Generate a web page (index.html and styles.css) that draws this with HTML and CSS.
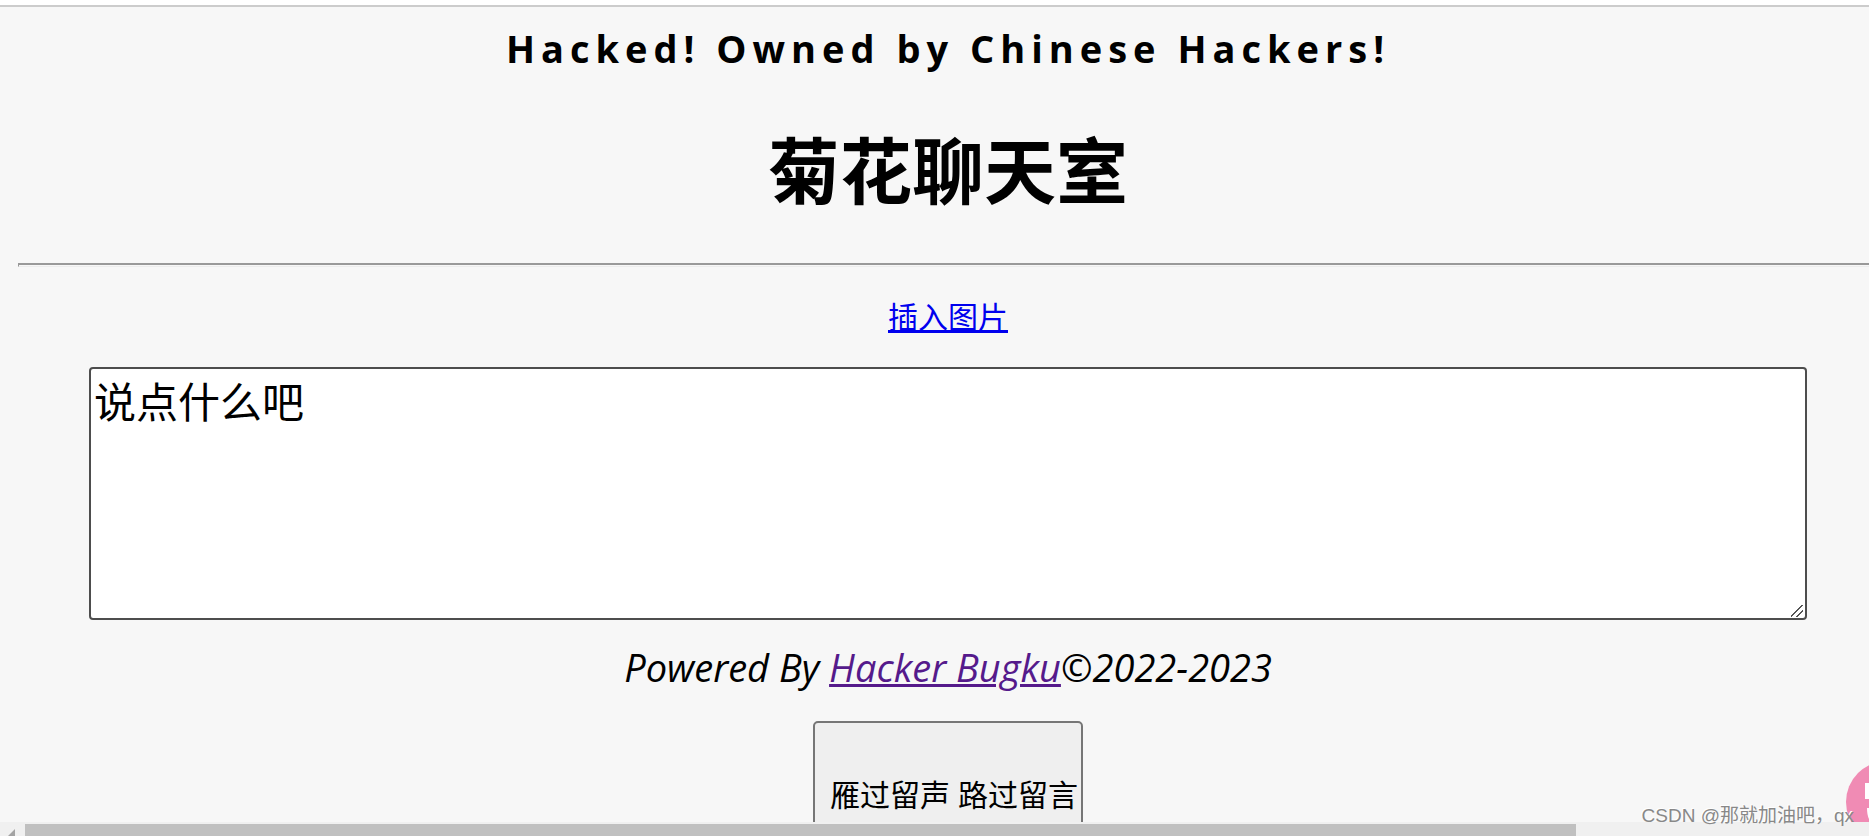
FILE: index.html
```
<!DOCTYPE html>
<html lang="zh-CN">
<head>
  <meta charset="UTF-8" />
  <meta name="viewport" content="width=device-width, initial-scale=1.0"/>
  <title>菊花聊天室</title>
  <link rel="stylesheet" href="styles.css">
</head>
<body>
  <div class="viewport">
    <main class="page">
      <h2 class="banner">Hacked! Owned by Chinese Hackers!</h2>
      <h1 class="title">菊花聊天室</h1>
      <hr class="line">
      <a class="insert" href="#">插入图片</a>
      <textarea class="message" aria-label="说点什么吧">说点什么吧</textarea>
      <p class="powered">Powered By <a href="#">Hacker Bugku</a>©2022-2023</p>
      <button class="send" type="button">雁过留声 路过留言</button>
    </main>

    <button class="float-btn" type="button" aria-label="翻译">
      <svg viewBox="0 0 82 82" width="82" height="82">
        <circle cx="41" cy="41" r="41" fill="#f08bb4"/>
        <path d="M19 22h26v16H19zM21 47h24v16H28q-7-3-7-16z" fill="#fff"/>
      </svg>
    </button>
  </div>

  <div class="scrollbar">
    <svg class="arrow" viewBox="0 0 25 14" width="25" height="14">
      <path d="M15 7v14l-7-7z" fill="#a3a3a3"/>
    </svg>
    <div class="thumb"></div>
  </div>

  <div class="watermark">CSDN @那就加油吧，qx</div>
</body>
</html>
```

FILE: styles.css
```
* {
  box-sizing: border-box;
}

body {
  margin: 0;
  height: 100vh;
  display: flex;
  flex-direction: column;
  overflow: hidden;
  background-color: #f7f7f7;
  color: #000;
  font-family: "Open Sans", "Noto Sans CJK SC", sans-serif;
}

.viewport {
  position: relative;
  flex: 1;
  min-height: 0;
  overflow: hidden;
  border-top: 2px solid #ccc;
  margin-top: 5px;
  box-shadow: 0 -5px 0 #fff;
}

/* the page is a little wider than the window */
.page {
  display: flex;
  flex-direction: column;
  align-items: center;
  margin-left: 18px;
  margin-right: -9px;
}

.banner {
  margin: 15px 0 0;
  font-size: 38px;
  line-height: 52px;
  letter-spacing: 6px;
}

.title {
  margin: 48px 0 0;
  font-size: 72px;
  line-height: 96px;
}

.line {
  width: 100%;
  margin: 45px 0 0;
  height: 4px;
  border: 1px solid #ececec;
  border-top: 2px solid #999;
  border-left-color: #999;
}

.insert {
  margin-top: 30px;
  font-size: 30px;
  line-height: 40px;
  color: #0000ee;
  text-decoration-thickness: 3px;
}

.message {
  width: calc(100% - 142px);
  height: 253px;
  margin: 30px 0 0;
  padding: 3px;
  border: 2px solid #4d4d4d;
  border-radius: 4px;
  background-color: #fff;
  color: #000;
  font-family: inherit;
  font-size: 42px;
  line-height: 60px;
}

.message::-webkit-resizer {
  background: linear-gradient(135deg, transparent 44%, #555 44% 54%, transparent 54% 69%, #555 69% 79%, transparent 79%) 1px 2px / 12px 12px no-repeat;
}

.powered {
  margin: 25px 0 0;
  font-family: "Lucida Handwriting", "Open Sans", sans-serif;
  font-style: italic;
  font-size: 38px;
  line-height: 44px;
}

.powered a {
  color: #551a8b;
  text-decoration-thickness: 3px;
}

.send {
  width: 270px;
  height: 144px;
  margin-top: 32px;
  padding: 0 2px 0 14px;
  border: 2px solid #767676;
  border-radius: 5px;
  background-color: #efefef;
  color: #000;
  font-family: inherit;
  font-size: 30px;
  white-space: nowrap;
}

.float-btn {
  position: absolute;
  right: -59px;
  bottom: -21px;
  padding: 0;
  border: 0;
  background: none;
}

.float-btn svg {
  display: block;
}

.scrollbar {
  display: flex;
  height: 14px;
  background-color: #f0f0f0;
}

.thumb {
  width: 83%;
  margin-top: 2px;
  background-color: #c0c0c0;
}

.watermark {
  position: absolute;
  right: 15px;
  bottom: 6px;
  font-family: "Liberation Sans", "Noto Sans CJK SC", sans-serif;
  font-size: 19px;
  line-height: 28px;
  color: #888;
  text-shadow: -1px -1px 0 #fff;
}
```
